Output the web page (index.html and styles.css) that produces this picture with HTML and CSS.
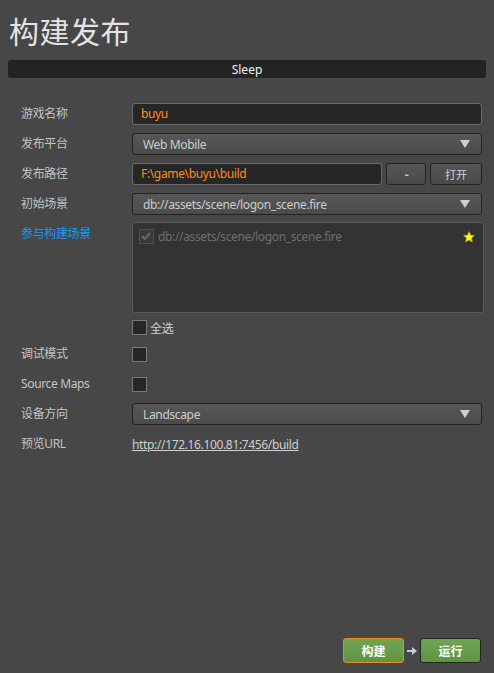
FILE: index.html
```html
<!DOCTYPE html>
<html>
<head>
<meta charset="utf-8">
<link rel="stylesheet" href="styles.css">
</head>
<body>
<div class="page">
  <h1 class="title">构建发布</h1>
  <div class="progress"><span>Sleep</span></div>
  <div class="sep"></div>
  <div class="form">
    <div class="label">游戏名称</div>
    <div class="ctrl"><div class="input orange">buyu</div></div>

    <div class="label">发布平台</div>
    <div class="ctrl"><div class="select"><span>Web Mobile</span><i class="tri"></i></div></div>

    <div class="label">发布路径</div>
    <div class="ctrl path">
      <div class="input orange grow">F:\game\buyu\build</div>
      <div class="btn dots">···</div>
      <div class="btn open">打开</div>
    </div>

    <div class="label">初始场景</div>
    <div class="ctrl"><div class="select"><span>db://assets/scene/logon_scene.fire</span><i class="tri"></i></div></div>

    <div class="label blue top">参与构建场景</div>
    <div class="ctrl col">
      <div class="scenes">
        <div class="scene">
          <span class="cb checked faded"><svg viewBox="0 0 14 14" width="14" height="14"><path d="M3 7.2 L5.8 10 L11 4" fill="none" stroke="#6a6a6a" stroke-width="2.2"/></svg></span>
          <span class="scene-name">db://assets/scene/logon_scene.fire</span>
          <svg class="star" viewBox="0 0 12 12" width="12" height="12"><polygon points="6,0.6 7.5,4.2 11.4,4.5 8.4,7 9.4,11 6,8.9 2.6,11 3.6,7 0.6,4.5 4.5,4.2" fill="#ffff00" stroke="#c8b400" stroke-width="0.6"/></svg>
        </div>
      </div>
      <label class="check-all"><span class="cb"></span><span>全选</span></label>
    </div>

    <div class="label">调试模式</div>
    <div class="ctrl"><span class="cb"></span></div>

    <div class="label">Source Maps</div>
    <div class="ctrl"><span class="cb"></span></div>

    <div class="label">设备方向</div>
    <div class="ctrl"><div class="select"><span>Landscape</span><i class="tri"></i></div></div>

    <div class="label">预览URL</div>
    <div class="ctrl"><a class="link" href="#">http://172.16.100.81:7456/build</a></div>
  </div>

  <div class="footer">
    <div class="gbtn focus">构建</div>
    <svg class="arrow" viewBox="0 0 12 12" width="12" height="12"><path d="M1 5 H6 V2 L11 6 L6 10 V7 H1 Z" fill="#c5cdd8"/></svg>
    <div class="gbtn">运行</div>
  </div>
</div>
</body>
</html>
```
FILE: styles.css
```css
* { box-sizing: border-box; }
html, body {
  margin: 0;
  padding: 0;
  background: #474747;
  height: 100%;
}
body {
  font-family: "Noto Sans", "Noto Sans CJK SC", sans-serif;
  font-size: 12px;
  letter-spacing: -0.35px;
  color: #c8c8c8;
}
.page {
  display: flex;
  flex-direction: column;
  min-height: 100vh;
}
.title {
  margin: 0;
  padding: 0 0 0 9px;
  height: 60px;
  line-height: 60px;
  font-family: "Noto Sans CJK SC", sans-serif;
  font-weight: normal;
  font-size: 30px;
  color: #e4e4e4;
  letter-spacing: 0.5px;
}
.progress {
  margin: 0 8px;
  height: 18px;
  background: #232323;
  border-radius: 3px;
  display: flex;
  align-items: center;
  justify-content: center;
  color: #f2f2f2;
  font-size: 12px;
  letter-spacing: 0;
}
.sep {
  height: 10px;
}
.form {
  display: grid;
  grid-template-columns: 111px minmax(0, 1fr);
  row-gap: 8px;
  padding: 15px 12px 0 21px;
  align-items: center;
}
.label {
  height: 22px;
  line-height: 22px;
  color: #c4c4c4;
  white-space: nowrap;
}
.label.blue { color: #0a9dff; }
.label.top { align-self: start; }
.ctrl {
  display: flex;
  align-items: center;
  min-height: 22px;
}
.ctrl.col {
  flex-direction: column;
  align-items: stretch;
}
.input {
  height: 22px;
  width: 100%;
  background: #262626;
  border: 1px solid #6b6b6b;
  border-radius: 3px;
  padding: 0 8px;
  line-height: 20px;
  color: #cfcfcf;
}
.input.orange { color: #ff8c1a; }
.path { gap: 4px; }
.grow { flex: 1; width: auto; }
.select {
  height: 22px;
  width: 100%;
  border: 1px solid #232323;
  border-radius: 3px;
  background: linear-gradient(#575757, #4b4b4b);
  padding: 0 10px;
  display: flex;
  align-items: center;
  justify-content: space-between;
  color: #cccccc;
}
.tri {
  width: 0;
  height: 0;
  border-left: 5px solid transparent;
  border-right: 5px solid transparent;
  border-top: 8px solid #cfcfcf;
  margin-right: 1px;
}
.btn {
  height: 22px;
  border: 1px solid #232323;
  border-radius: 3px;
  background: linear-gradient(#555555, #4a4a4a);
  display: flex;
  align-items: center;
  justify-content: center;
  color: #cfcfcf;
  font-size: 11px;
}
.btn.dots { width: 40px; font-size: 9px; letter-spacing: -1.5px; font-weight: bold; }
.btn.open { width: 52px; letter-spacing: 0; }
.scenes {
  margin-top: -1px;
  margin-right: -2px;
  height: 91px;
  background: #333333;
  border: 1px solid #5a5a5a;
  border-radius: 3px;
  padding: 6px 6px;
}
.scene {
  display: flex;
  align-items: center;
  height: 15px;
}
.scene-name {
  margin-left: 4px;
  color: #6e6e6e;
  flex: 1;
}
.star { margin-right: 2px; }
.cb {
  display: inline-block;
  width: 15px;
  height: 15px;
  background: #262626;
  border: 1px solid #7a7a7a;
  flex: none;
}
.cb svg { display: block; margin: -1px 0 0 -1px; }
.cb.faded {
  background: #393939;
  border-color: #505050;
}
.check-all {
  display: flex;
  align-items: center;
  gap: 3px;
  margin-top: 7px;
  color: #d0d0d0;
  height: 15px;
}
.link {
  color: #cfcfcf;
  text-decoration: underline;
}
.footer {
  margin-top: auto;
  display: flex;
  align-items: center;
  justify-content: flex-end;
  padding: 0 13px 10px 0;
  gap: 2px;
}
.gbtn {
  width: 61px;
  height: 25px;
  border-radius: 3px;
  background: linear-gradient(#6fa552, #5f9444);
  border: 1px solid #1f2a18;
  color: #ffffff;
  font-weight: bold;
  font-family: "Noto Sans CJK SC", sans-serif;
  font-size: 12px;
  letter-spacing: 0;
  display: flex;
  align-items: center;
  justify-content: center;
}
.gbtn.focus { border-color: #f08c1a; }
.arrow { margin: 0; }
```
